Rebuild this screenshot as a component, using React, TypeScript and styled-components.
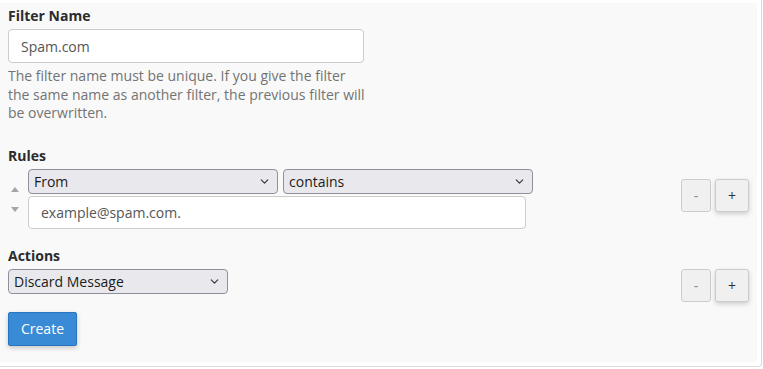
import styled, { createGlobalStyle } from "styled-components";
import { ChevronDown } from "lucide-react";

const GlobalStyle = createGlobalStyle`
  html, body {
    margin: 0;
    padding: 0;
    background: #ffffff;
  }
  body {
    font-family: "Open Sans", "Liberation Sans", sans-serif;
    font-size: 14px;
    color: #333333;
  }
`;

type SelectProps = {
  value: string;
  options: string[];
  width: number;
};

const Select = ({ value, options, width }: SelectProps): JSX.Element => (
  <SelectWrap $width={width}>
    <SelectBox defaultValue={value}>
      {options.map((option) => (
        <option key={option}>{option}</option>
      ))}
    </SelectBox>
    <ChevronDown className="chevron" size={13} strokeWidth={2} />
  </SelectWrap>
);

const RowButtons = ({ offset }: { offset: number }): JSX.Element => (
  <ButtonGroup $offset={offset}>
    <SmallButton type="button">-</SmallButton>
    <SmallButton type="button" $raised>
      +
    </SmallButton>
  </ButtonGroup>
);

const App = (): JSX.Element => {
  return (
    <>
      <GlobalStyle />
      <Outer>
        <Panel>
          <Label>Filter Name</Label>
          <NameInput defaultValue="Spam.com" />
          <HelpText>
            The filter name must be unique. If you give the filter the same
            name as another filter, the previous filter will be overwritten.
          </HelpText>

          <Label $gap={23}>Rules</Label>
          <Row>
            <RuleBlock>
              <Arrows>
                <Arrow $up />
                <Arrow />
              </Arrows>
              <RuleFields>
                <SelectLine>
                  <Select
                    value="From"
                    options={["From", "Subject", "To", "Reply Address", "Body"]}
                    width={250}
                  />
                  <Select
                    value="contains"
                    options={["contains", "matches regex", "does not contain", "equals", "begins with"]}
                    width={250}
                  />
                </SelectLine>
                <ValueInput defaultValue="example@spam.com." />
              </RuleFields>
            </RuleBlock>
            <RowButtons offset={10} />
          </Row>

          <Label $gap={17}>Actions</Label>
          <Row>
            <Select
              value="Discard Message"
              options={["Discard Message", "Redirect to Email", "Fail With Message", "Stop Processing Rules"]}
              width={220}
            />
            <RowButtons offset={0} />
          </Row>

          <CreateButton type="button">Create</CreateButton>
        </Panel>
      </Outer>
    </>
  );
};

export default App;

const Outer = styled.div`
  width: 762px;
  box-sizing: border-box;
  padding: 3px 4px 4px 0;
  border-right: 1px solid #dcdcdc;
  border-bottom: 1px solid #dcdcdc;
  border-bottom-right-radius: 4px;
`;

const Panel = styled.div`
  background: #f9f9f9;
  padding: 3px 8px 16px 8px;
`;

const Label = styled.div<{ $gap?: number }>`
  font-weight: 700;
  font-size: 14px;
  line-height: 20px;
  color: #2b2b2b;
  margin-top: ${(p) => p.$gap ?? 0}px;
  margin-bottom: 3px;
`;

const NameInput = styled.input`
  display: block;
  box-sizing: border-box;
  width: 356px;
  height: 34px;
  padding: 6px 12px;
  border: 1px solid #cccccc;
  border-radius: 4px;
  background: #ffffff;
  font-family: inherit;
  font-size: 14px;
  color: #555555;
`;

const HelpText = styled.p`
  width: 362px;
  margin: 4px 0 0;
  font-size: 14px;
  line-height: 18.5px;
  color: #737373;
`;

const Row = styled.div`
  display: flex;
  justify-content: space-between;
  align-items: flex-start;
`;

const RuleBlock = styled.div`
  display: flex;
  align-items: flex-start;
`;

const Arrows = styled.div`
  width: 20px;
  box-sizing: border-box;
  display: flex;
  flex-direction: column;
  align-items: flex-start;
  gap: 15px;
  padding: 18px 0 0 3px;
`;

const Arrow = styled.span<{ $up?: boolean }>`
  width: 0;
  height: 0;
  border-left: 4px solid transparent;
  border-right: 4px solid transparent;
  ${(p) =>
    p.$up ? "border-bottom: 5px solid #a5a5a5;" : "border-top: 5px solid #a5a5a5;"}
`;

const RuleFields = styled.div`
  display: flex;
  flex-direction: column;
  gap: 2px;
`;

const SelectLine = styled.div`
  display: flex;
  gap: 5px;
`;

const SelectWrap = styled.div<{ $width: number }>`
  position: relative;
  width: ${(p) => p.$width}px;

  .chevron {
    position: absolute;
    right: 7px;
    top: 6px;
    color: #333333;
    pointer-events: none;
  }
`;

const SelectBox = styled.select`
  appearance: none;
  display: block;
  box-sizing: border-box;
  width: 100%;
  height: 25px;
  padding: 0 24px 0 5px;
  border: 1px solid #8f8f9d;
  border-radius: 4px;
  background: #e9e9ed;
  font-family: inherit;
  font-size: 14px;
  color: #1b1b1b;
`;

const ValueInput = styled.input`
  display: block;
  box-sizing: border-box;
  width: 498px;
  height: 33px;
  padding: 6px 12px;
  border: 1px solid #cccccc;
  border-radius: 4px;
  background: #ffffff;
  font-family: inherit;
  font-size: 14px;
  color: #555555;
`;

const ButtonGroup = styled.div<{ $offset: number }>`
  display: flex;
  gap: 4px;
  margin-top: ${(p) => p.$offset}px;
`;

const SmallButton = styled.button<{ $raised?: boolean }>`
  box-sizing: border-box;
  width: ${(p) => (p.$raised ? "34px" : "30px")};
  height: 33px;
  padding: 0;
  border: 1px solid #cccccc;
  border-radius: 3px;
  background: #f0f0f0;
  font-family: inherit;
  font-size: 14px;
  color: ${(p) => (p.$raised ? "#333333" : "#888888")};
  box-shadow: ${(p) => (p.$raised ? "0 2px 5px rgba(0, 0, 0, 0.18)" : "none")};
`;

const CreateButton = styled.button`
  display: block;
  margin-top: 10px;
  box-sizing: border-box;
  width: 69px;
  height: 34px;
  padding: 0;
  border: 1px solid #2a75bf;
  border-radius: 2px;
  background: #3a8bd6;
  font-family: inherit;
  font-size: 14px;
  color: #ffffff;
  box-shadow: 0 2px 5px rgba(0, 0, 0, 0.2);
`;
